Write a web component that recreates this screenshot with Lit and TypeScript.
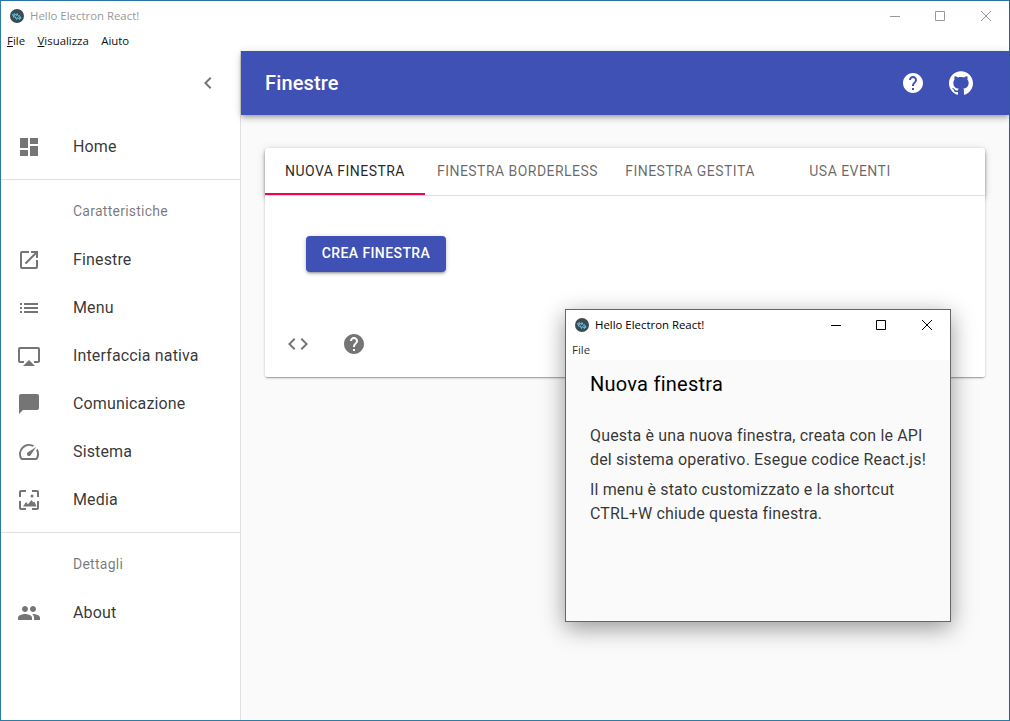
import { LitElement, html, css, svg } from 'lit';
import { customElement } from 'lit/decorators.js';

const icons: Record<string, string> = {
  dashboard: 'M3 13h8V3H3v10zm0 8h8v-6H3v6zm10 0h8V11h-8v10zm0-18v6h8V3h-8z',
  open: 'M19 19H5V5h7V3H5c-1.11 0-2 .9-2 2v14c0 1.1.89 2 2 2h14c1.1 0 2-.9 2-2v-7h-2v7zM14 3v2h3.59l-9.83 9.83 1.41 1.41L19 6.41V10h2V3h-7z',
  list: 'M3 13h2v-2H3v2zm0 4h2v-2H3v2zm0-8h2V7H3v2zm4 4h14v-2H7v2zm0 4h14v-2H7v2zM7 7v2h14V7H7z',
  airplay: 'M6 22h12l-6-6zM21 3H3c-1.1 0-2 .9-2 2v12c0 1.1.9 2 2 2h4v-2H3V5h18v12h-4v2h4c1.1 0 2-.9 2-2V5c0-1.1-.9-2-2-2z',
  chat: 'M20 2H4c-1.1 0-2 .9-2 2v18l4-4h14c1.1 0 2-.9 2-2V4c0-1.1-.9-2-2-2z',
  speed: 'M20.38 8.57l-1.23 1.85a8 8 0 0 1-.22 7.58H5.07A8 8 0 0 1 15.58 6.85l1.85-1.23A10 10 0 0 0 3.35 19a2 2 0 0 0 1.72 1h13.85a2 2 0 0 0 1.74-1 10 10 0 0 0-.27-10.44zm-9.79 6.84a2 2 0 0 0 2.83 0l5.66-8.49-8.49 5.66a2 2 0 0 0 0 2.83z',
  media: 'M2 9V4c0-1.1.9-2 2-2h5v2H4v5H2zm13-7h5c1.1 0 2 .9 2 2v5h-2V4h-5V2zM2 13h2v7h5v2H4c-1.1 0-2-.9-2-2v-7zm18 0h2v7c0 1.1-.9 2-2 2h-5v-2h5v-7zM6 18.5l3-4.5 2 2.2L14.500 12l2 2.500 1-1 2 5H6zM15 6.500a1.500 1.500 0 1 1 0 3 1.500 1.500 0 0 1 0-3z',
  people: 'M16 11c1.66 0 2.99-1.34 2.99-3S17.66 5 16 5c-1.66 0-3 1.34-3 3s1.34 3 3 3zm-8 0c1.66 0 2.99-1.34 2.99-3S9.66 5 8 5C6.34 5 5 6.34 5 8s1.34 3 3 3zm0 2c-2.33 0-7 1.17-7 3.5V19h14v-2.5c0-2.33-4.67-3.5-7-3.5zm8 0c-.29 0-.62.02-.97.05 1.16.84 1.97 1.97 1.97 3.45V19h6v-2.5c0-2.33-4.67-3.5-7-3.5z',
  help: 'M12 2C6.48 2 2 6.48 2 12s4.48 10 10 10 10-4.48 10-10S17.52 2 12 2zm1 17h-2v-2h2v2zm2.07-7.75l-.9.92C13.45 12.9 13 13.5 13 15h-2v-.5c0-1.1.45-2.1 1.17-2.83l1.24-1.26c.37-.36.59-.86.59-1.41 0-1.1-.9-2-2-2s-2 .9-2 2H8c0-2.21 1.79-4 4-4s4 1.79 4 4c0 .88-.36 1.68-.93 2.25z',
  code: 'M9.4 16.6L4.8 12l4.6-4.6L8 6l-6 6 6 6 1.4-1.4zm5.2 0l4.6-4.6-4.6-4.6L16 6l6 6-6 6-1.4-1.4z',
  chevron: 'M15.41 7.41L14 6l-6 6 6 6 1.41-1.41L10.83 12z',
  github: 'M12 .297c-6.63 0-12 5.373-12 12 0 5.303 3.438 9.8 8.205 11.385.6.113.82-.258.82-.577 0-.285-.01-1.04-.015-2.04-3.338.724-4.042-1.61-4.042-1.61C4.422 18.07 3.633 17.7 3.633 17.7c-1.087-.744.084-.729.084-.729 1.205.084 1.838 1.236 1.838 1.236 1.07 1.835 2.809 1.305 3.495.998.108-.776.417-1.305.76-1.605-2.665-.3-5.466-1.332-5.466-5.93 0-1.31.465-2.38 1.235-3.22-.135-.303-.54-1.523.105-3.176 0 0 1.005-.322 3.3 1.23.96-.267 1.98-.399 3-.405 1.02.006 2.04.138 3 .405 2.28-1.552 3.285-1.23 3.285-1.23.645 1.653.24 2.873.12 3.176.765.84 1.23 1.91 1.23 3.22 0 4.61-2.805 5.625-5.475 5.92.42.36.81 1.096.81 2.22 0 1.606-.015 2.896-.015 3.286 0 .315.21.69.825.57C20.565 22.092 24 17.592 24 12.297c0-6.627-5.373-12-12-12',
};

const icon = (name: string) =>
  html`<svg class="icon" viewBox="0 0 24 24" fill="currentColor"><path d=${icons[name]}></path></svg>`;

const logo = () => html`<svg class="logo" viewBox="0 0 14 14">
  <circle cx="7" cy="7" r="7" fill="#3b4a55"></circle>
  ${svg`<path d="M2.5 5.500l2 1-.5-2 2.500 2 .5-2 1.500 3 1-1 1.500 3-2-1 .5 2-2.500-2-.5 2-1.500-3-1 1z" fill="none" stroke="#62c6de" stroke-width="1"></path>`}
</svg>`;

const winControls = () => html`<div class="controls">
  <svg viewBox="0 0 10 10"><path d="M0 5.500h10" stroke="currentColor" fill="none"></path></svg>
  <svg viewBox="0 0 10 10"><path d="M.5.5h9v9h-9z" stroke="currentColor" fill="none"></path></svg>
  <svg class="close" viewBox="0 0 10 10"><path d="M0 0l10 10M10 0L0 10" stroke="currentColor" fill="none"></path></svg>
</div>`;

@customElement('app-root')
export class AppRoot extends LitElement {
  static styles = css`
    :host {
      display: flex;
      flex-direction: column;
      position: relative;
      box-sizing: border-box;
      width: 1010px;
      height: 721px;
      border: 1px solid #2b7da6;
      border-top-color: #2a74a4;
      border-right-color: #2f5f98;
      background: #fff;
      overflow: hidden;
      font-family: Roboto, sans-serif;
      color: rgba(0, 0, 0, 0.87);
    }
    .icon {
      width: 24px;
      height: 24px;
      flex: none;
      display: block;
    }
    .logo {
      width: 14px;
      height: 14px;
      flex: none;
    }

    /* native window chrome */
    .titlebar {
      display: flex;
      align-items: center;
      height: 29px;
      flex: none;
      padding-left: 9px;
      gap: 6px;
      font: 11.4px 'Open Sans', sans-serif;
      color: #999;
    }
    .controls {
      margin-left: auto;
      display: flex;
      gap: 35px;
      padding-right: 18px;
      color: #999;
    }
    .controls svg {
      width: 10px;
      height: 10px;
      display: block;
    }
    .controls .close {
      margin-left: 1px;
    }
    .menubar {
      display: flex;
      align-items: center;
      gap: 12.5px;
      height: 21px;
      flex: none;
      padding-left: 6px;
      font: 11.4px 'Open Sans', sans-serif;
      color: #111;
    }

    .body {
      display: flex;
      flex: 1;
      min-height: 0;
    }

    /* sidebar */
    .sidebar {
      width: 240px;
      box-sizing: border-box;
      flex: none;
      border-right: 1px solid #e0e0e0;
    }
    .toolbar {
      height: 64px;
      display: flex;
      align-items: center;
      justify-content: flex-end;
      padding-right: 20px;
      color: rgba(0, 0, 0, 0.54);
    }
    .group {
      padding: 8px 0;
      border-bottom: 1px solid #e0e0e0;
    }
    .group.last {
      border-bottom: none;
    }
    .row {
      display: flex;
      align-items: center;
      height: 48px;
      padding-left: 16px;
      font-size: 16px;
      letter-spacing: 0.15px;
      color: rgba(0, 0, 0, 0.8);
    }
    .row .icon {
      color: rgba(0, 0, 0, 0.54);
      margin-right: 32px;
    }
    .row span {
      padding-bottom: 2px;
    }
    .sub {
      height: 48px;
      line-height: 46px;
      padding-left: 72px;
      font-size: 14px;
      letter-spacing: 0.25px;
      color: rgba(0, 0, 0, 0.54);
    }

    /* main */
    .main {
      flex: 1;
      background: #fafafa;
      min-width: 0;
    }
    .appbar {
      height: 64px;
      background: #3f51b5;
      color: #fff;
      display: flex;
      align-items: center;
      padding: 0 24px;
      box-shadow: 0 2px 4px -1px rgba(0, 0, 0, 0.2), 0 4px 5px rgba(0, 0, 0, 0.14), 0 1px 10px rgba(0, 0, 0, 0.12);
    }
    .appbar h1 {
      margin: 0;
      font-size: 20px;
      font-weight: 500;
      letter-spacing: 0.15px;
      flex: 1;
    }
    .iconbtn {
      width: 48px;
      height: 48px;
      display: flex;
      align-items: center;
      justify-content: center;
      flex: none;
    }
    .content {
      padding: 33px 24px 0;
    }
    .card {
      height: 229px;
      background: #fff;
      border-radius: 3px;
      box-shadow: 0 1px 3px rgba(0, 0, 0, 0.2), 0 1px 1px rgba(0, 0, 0, 0.14), 0 2px 1px -1px rgba(0, 0, 0, 0.12);
      display: flex;
      flex-direction: column;
    }
    .tabs {
      display: flex;
      height: 48px;
      flex: none;
      box-sizing: border-box;
      border-bottom: 1px solid #e0e0e0;
      border-radius: 3px 3px 0 0;
      background: #fff;
      box-shadow: 0 2px 4px -1px rgba(0, 0, 0, 0.2), 0 4px 5px rgba(0, 0, 0, 0.14), 0 1px 10px rgba(0, 0, 0, 0.12);
    }
    .tab {
      min-width: 160px;
      box-sizing: border-box;
      height: 47px;
      padding: 0 12px 2px;
      display: flex;
      align-items: center;
      justify-content: center;
      font-size: 14px;
      letter-spacing: 0.46px;
      color: rgba(0, 0, 0, 0.6);
    }
    .tab.active {
      color: rgba(0, 0, 0, 0.87);
      border-bottom: 2px solid #f50057;
      padding-bottom: 0;
    }
    /* sits above the shadow that the tab strip casts downward */
    .lower {
      position: relative;
      flex: 1;
      display: flex;
      flex-direction: column;
      background: #fff;
      border-radius: 0 0 3px 3px;
    }
    .panel {
      padding: 40px 41px 0;
      flex: 1;
    }
    .button {
      width: 140px;
      height: 36px;
      box-sizing: border-box;
      padding-bottom: 2px;
      border-radius: 4px;
      background: #3f51b5;
      color: #fff;
      display: flex;
      align-items: center;
      justify-content: center;
      font-size: 14px;
      font-weight: 500;
      letter-spacing: 0.4px;
      box-shadow: 0 1px 5px rgba(0, 0, 0, 0.2), 0 2px 2px rgba(0, 0, 0, 0.14), 0 3px 1px -2px rgba(0, 0, 0, 0.12);
    }
    .actions {
      display: flex;
      gap: 8px;
      padding: 0 0 9px 9px;
      color: rgba(0, 0, 0, 0.54);
    }

    /* floating child window */
    .child {
      position: absolute;
      left: 564px;
      top: 308px;
      width: 386px;
      height: 313px;
      box-sizing: border-box;
      border: 1px solid #666;
      background: #fff;
      display: flex;
      flex-direction: column;
      box-shadow: 0 6px 22px rgba(0, 0, 0, 0.4);
    }
    .child .titlebar {
      color: #000;
    }
    .child .controls {
      color: #000;
    }
    .child .menubar {
      color: #333;
    }
    .child-body {
      flex: 1;
      background: #fafafa;
      padding: 12px 24px 0;
    }
    .child-body h2 {
      margin: 0 0 28px;
      font-size: 20px;
      line-height: 24px;
      font-weight: 400;
      letter-spacing: 0.25px;
      color: #000;
    }
    .child-body p {
      margin: 0 0 6px;
      font-size: 16px;
      line-height: 24px;
      letter-spacing: 0.15px;
      color: rgba(0, 0, 0, 0.8);
    }
  `;

  render() {
    return html`
      <div class="titlebar">${logo()}<span>Hello Electron React!</span>${winControls()}</div>
      <div class="menubar"><span><u>F</u>ile</span><span><u>V</u>isualizza</span><span>Aiuto</span></div>
      <div class="body">
        <nav class="sidebar">
          <div class="toolbar">${icon('chevron')}</div>
          <div class="group">
            <div class="row">${icon('dashboard')}<span>Home</span></div>
          </div>
          <div class="group">
            <div class="sub">Caratteristiche</div>
            <div class="row">${icon('open')}<span>Finestre</span></div>
            <div class="row">${icon('list')}<span>Menu</span></div>
            <div class="row">${icon('airplay')}<span>Interfaccia nativa</span></div>
            <div class="row">${icon('chat')}<span>Comunicazione</span></div>
            <div class="row">${icon('speed')}<span>Sistema</span></div>
            <div class="row">${icon('media')}<span>Media</span></div>
          </div>
          <div class="group last">
            <div class="sub">Dettagli</div>
            <div class="row">${icon('people')}<span>About</span></div>
          </div>
        </nav>
        <main class="main">
          <header class="appbar">
            <h1>Finestre</h1>
            <div class="iconbtn">${icon('help')}</div>
            <div class="iconbtn">${icon('github')}</div>
          </header>
          <div class="content">
            <section class="card">
              <div class="tabs">
                <div class="tab active">NUOVA FINESTRA</div>
                <div class="tab">FINESTRA BORDERLESS</div>
                <div class="tab">FINESTRA GESTITA</div>
                <div class="tab">USA EVENTI</div>
              </div>
              <div class="lower">
                <div class="panel"><div class="button">CREA FINESTRA</div></div>
                <div class="actions">
                  <div class="iconbtn">${icon('code')}</div>
                  <div class="iconbtn">${icon('help')}</div>
                </div>
              </div>
            </section>
          </div>
        </main>
      </div>
      <div class="child">
        <div class="titlebar">${logo()}<span>Hello Electron React!</span>${winControls()}</div>
        <div class="menubar"><span>File</span></div>
        <div class="child-body">
          <h2>Nuova finestra</h2>
          <p>Questa è una nuova finestra, creata con le API del sistema operativo. Esegue codice React.js!</p>
          <p>Il menu è stato customizzato e la shortcut CTRL+W chiude questa finestra.</p>
        </div>
      </div>
    `;
  }
}
